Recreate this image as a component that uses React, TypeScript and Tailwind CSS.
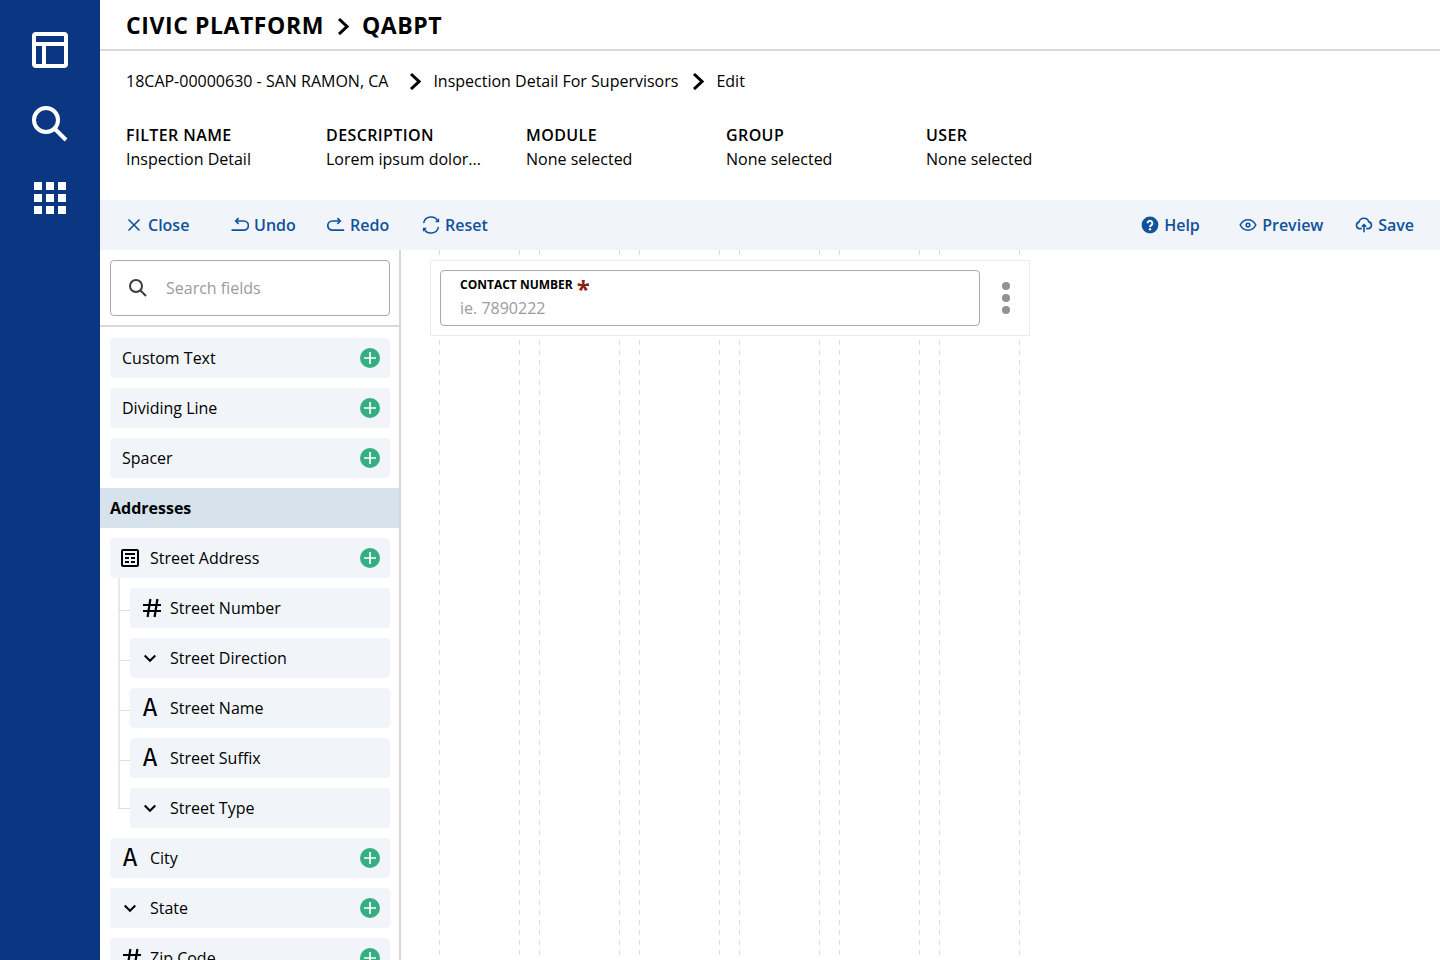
import React from "react";

type FieldKind = "text" | "number" | "select" | "group";

interface Field {
  label: string;
  kind?: FieldKind;
  children?: Field[];
}

const basicFields: Field[] = [
  { label: "Custom Text" },
  { label: "Dividing Line" },
  { label: "Spacer" },
];

const addressFields: Field[] = [
  {
    label: "Street Address",
    kind: "group",
    children: [
      { label: "Street Number", kind: "number" },
      { label: "Street Direction", kind: "select" },
      { label: "Street Name", kind: "text" },
      { label: "Street Suffix", kind: "text" },
      { label: "Street Type", kind: "select" },
    ],
  },
  { label: "City", kind: "text" },
  { label: "State", kind: "select" },
  { label: "Zip Code", kind: "number" },
];

const filterDetails = [
  { name: "FILTER NAME", value: "Inspection Detail" },
  { name: "DESCRIPTION", value: "Lorem ipsum dolor..." },
  { name: "MODULE", value: "None selected" },
  { name: "GROUP", value: "None selected" },
  { name: "USER", value: "None selected" },
];

const gridColumns = [1, 2, 3, 4, 5, 6];

const CloseIcon = () => (
  <svg className="size-[18px]" viewBox="0 0 18 18" fill="none" stroke="currentColor" strokeWidth="1.6">
    <path d="M3.5 3.5l11 11M14.5 3.5l-11 11" />
  </svg>
);

const UndoIcon = () => (
  <svg className="size-[18px]" viewBox="0 0 18 18" fill="none" stroke="currentColor" strokeWidth="1.7">
    <path d="M0.5 14.2H12.8a4.6 4.6 0 0 0 0-9.2H5" />
    <path d="M7.6 2.2L4.8 5L7.6 7.8" />
  </svg>
);

const RedoIcon = () => (
  <svg className="size-[18px]" viewBox="0 0 18 18" fill="none" stroke="currentColor" strokeWidth="1.7">
    <path d="M17.2 14.2H5.4a4.6 4.6 0 0 1 0-9.2H13" />
    <path d="M10.4 2.2L13.2 5L10.4 7.8" />
  </svg>
);

const ResetIcon = () => (
  <svg className="size-[18px]" viewBox="0 0 18 18" fill="none" stroke="currentColor" strokeWidth="1.5">
    <path d="M1.6 7.2A7.6 7.6 0 0 1 16 5.4M16.4 10.8A7.6 7.6 0 0 1 2 12.6" />
    <path d="M16.4 2.8V5.6H13.6M1.6 15.2V12.4H4.4" />
  </svg>
);

const HelpIcon = () => (
  <svg className="size-[18px]" viewBox="0 0 18 18" fill="none">
    <circle cx="9" cy="9" r="8.4" fill="currentColor" />
    <path d="M6.6 7.2a2.4 2.4 0 1 1 3.7 2c-.9.6-1.3.8-1.3 1.8" stroke="#fff" strokeWidth="2" />
    <circle cx="9" cy="13.2" r="1.2" fill="#fff" />
  </svg>
);

const PreviewIcon = () => (
  <svg className="size-[18px]" viewBox="0 0 18 18" fill="none" stroke="currentColor" strokeWidth="1.6">
    <path d="M1.2 9C3 5.6 5.8 3.8 9 3.8S15 5.6 16.8 9C15 12.4 12.2 14.2 9 14.2S3 12.4 1.2 9Z" />
    <circle cx="9" cy="9" r="1.8" />
  </svg>
);

const SaveIcon = () => (
  <svg className="size-[18px]" viewBox="0 0 18 18" fill="none" stroke="currentColor" strokeWidth="1.6">
    <path d="M6.8 12.6H4.6a3.3 3.3 0 0 1-.6-6.5a5.1 5.1 0 0 1 9.8-.2a3.4 3.4 0 0 1-.4 6.7H11.2" />
    <path d="M9 16.2V8.8M6.8 10.8L9 8.6L11.2 10.8" />
  </svg>
);

const SearchIcon: React.FC<{ className: string }> = ({ className }) => (
  <svg className={className} viewBox="0 0 36 36" fill="none" stroke="currentColor" strokeWidth="4">
    <circle cx="14" cy="14" r="12" />
    <path d="M22.5 22.5L34 34" />
  </svg>
);

const CrumbArrow = () => (
  <svg className="h-[18px] w-3 shrink-0" viewBox="0 0 12 18" fill="none" stroke="currentColor" strokeWidth="3">
    <path d="M2 2L10 9.5L2 17" />
  </svg>
);

const KindIcon: React.FC<{ kind: FieldKind }> = ({ kind }) => {
  if (kind === "text") {
    return (
      <span aria-hidden="true" className="w-5 text-center font-['DejaVu_Sans_Mono',monospace] text-[25px] leading-5">
        A
      </span>
    );
  }
  if (kind === "number") {
    return (
      <svg className="size-5 overflow-visible" viewBox="0 0 20 20" fill="none" stroke="currentColor" strokeWidth="2.2">
        <path d="M3 7H21M3 13H21M10.4 1L7.6 19M17.4 1L14.6 19" />
      </svg>
    );
  }
  if (kind === "select") {
    return (
      <svg className="size-5" viewBox="0 0 20 20" fill="none" stroke="currentColor" strokeWidth="2">
        <path d="M4.7 7.5L10 12.8L15.3 7.5" />
      </svg>
    );
  }
  return (
    <svg className="size-5" viewBox="0 0 20 20" fill="none" stroke="currentColor" strokeWidth="2">
      <rect x="2" y="2" width="16" height="16" rx="1" />
      <path d="M5 6H15M5 10H9M11 10H15M5 14H9M11 14H15" />
    </svg>
  );
};

const FieldRow: React.FC<{ field: Field; addable?: boolean }> = ({ field, addable = true }) => (
  <div
    className={`flex h-10 items-center justify-between rounded bg-[#f1f5fa] pr-2.5 ${
      field.kind ? "pl-2.5" : "pl-3"
    }`}
  >
    <span className="flex items-center gap-2.5">
      {field.kind && <KindIcon kind={field.kind} />}
      {field.label}
    </span>
    {addable && (
      <button type="button" aria-label={`Add ${field.label}`} className="size-5 rounded-full bg-[#35ae84]">
        <svg className="size-5" viewBox="0 0 20 20" fill="none" stroke="#fff" strokeWidth="1.7">
          <path d="M10 4V16M4 10H16" />
        </svg>
      </button>
    )}
  </div>
);

const FieldItem: React.FC<{ field: Field }> = ({ field }) => (
  <li className="flex flex-col gap-2.5">
    <FieldRow field={field} />
    {field.children && (
      <ul className="flex flex-col gap-2.5 pl-5">
        {field.children.map((child) => (
          <li key={child.label} className="group relative">
            <span className="absolute -top-2.5 -left-3 h-[50px] w-0.5 bg-[#e6eaee] group-last:h-[31px]" />
            <span className="absolute top-[22px] -left-3 h-px w-3 bg-[#d9dfe4] group-last:top-5" />
            <FieldRow field={child} addable={false} />
          </li>
        ))}
      </ul>
    )}
  </li>
);

const ToolButton: React.FC<{ label: string; icon: React.ReactNode; className?: string }> = ({
  label,
  icon,
  className = "",
}) => (
  <button type="button" className={`flex items-center gap-[5px] font-semibold text-[#10529c] ${className}`}>
    {icon}
    {label}
  </button>
);

const App: React.FC = () => {
  return (
    <div className="flex h-screen overflow-hidden bg-white font-['Open_Sans',sans-serif] text-base text-black">
      <nav className="flex w-[100px] shrink-0 flex-col items-center gap-[38px] bg-[#0b3782] pt-8 text-white">
        <button type="button" aria-label="Layout">
          <svg className="size-9" viewBox="0 0 36 36" fill="none" stroke="currentColor" strokeWidth="4">
            <rect x="2" y="2" width="32" height="32" rx="2" />
            <path d="M2 12H34M12 12V34" />
          </svg>
        </button>
        <button type="button" aria-label="Search">
          <SearchIcon className="size-9" />
        </button>
        <button type="button" aria-label="Apps">
          <svg className="size-9" viewBox="0 0 36 36" fill="currentColor">
            <path d="M2 2h8v8H2zM14 2h8v8h-8zM26 2h8v8h-8zM2 14h8v8H2zM14 14h8v8h-8zM26 14h8v8h-8zM2 26h8v8H2zM14 26h8v8h-8zM26 26h8v8h-8z" />
          </svg>
        </button>
      </nav>

      <div className="flex min-w-0 flex-1 flex-col">
        <header className="flex h-[51px] shrink-0 items-center border-b-2 border-[#d8d8d8] pt-0.5 pl-[26px]">
          <h1 className="flex items-center gap-[13px] text-[23px] font-bold tracking-wide">
            CIVIC PLATFORM
            <CrumbArrow />
            QABPT
          </h1>
        </header>

        <section className="flex h-[149px] shrink-0 flex-col gap-6 pt-[18px] pl-[26px]">
          <div className="flex items-center gap-3.5">
            <a href="#record" className="pr-[7px]">
              18CAP-00000630 - SAN RAMON, CA
            </a>
            <span className="flex items-center gap-3">
              <CrumbArrow />
              <a href="#detail">Inspection Detail For Supervisors</a>
            </span>
            <span className="flex items-center gap-3">
              <CrumbArrow />
              <span>Edit</span>
            </span>
          </div>
          <dl className="flex pt-1.5">
            {filterDetails.map((detail) => (
              <div key={detail.name} className="w-[200px]">
                <dt className="font-semibold tracking-wide">{detail.name}</dt>
                <dd>{detail.value}</dd>
              </div>
            ))}
          </dl>
        </section>

        <div className="flex h-[50px] shrink-0 items-center justify-between bg-[#f1f5fa] pr-[26px] pl-[25px]">
          <div className="flex">
            <ToolButton label="Close" icon={<CloseIcon />} className="w-[106px]" />
            <ToolButton label="Undo" icon={<UndoIcon />} className="w-24" />
            <ToolButton label="Redo" icon={<RedoIcon />} className="w-[95px]" />
            <ToolButton label="Reset" icon={<ResetIcon />} />
          </div>
          <div className="flex">
            <ToolButton label="Help" icon={<HelpIcon />} className="w-[98px]" />
            <ToolButton label="Preview" icon={<PreviewIcon />} className="w-[116px]" />
            <ToolButton label="Save" icon={<SaveIcon />} />
          </div>
        </div>

        <div className="flex min-h-0 flex-1">
          <aside className="flex w-[301px] shrink-0 flex-col border-r-2 border-[#d8d8d8]">
            <div className="border-b-2 border-[#d8d8d8] pt-2.5 pr-[9px] pb-[9px] pl-2.5">
              <label className="flex h-14 items-center gap-[19px] rounded border border-[#a9a9ae] pl-[18px]">
                <SearchIcon className="size-[18px] text-[#3c3c40]" />
                <input
                  type="text"
                  aria-label="Search fields"
                  placeholder="Search fields"
                  className="min-w-0 flex-1 outline-none placeholder:text-[#9b9ba1]"
                />
              </label>
            </div>
            <div className="flex min-h-0 flex-1 flex-col gap-2.5 overflow-y-auto pt-[11px] [scrollbar-width:none]">
              <ul className="flex flex-col gap-2.5 pr-[9px] pl-2.5">
                {basicFields.map((field) => (
                  <FieldItem key={field.label} field={field} />
                ))}
              </ul>
              <h2 className="flex h-10 shrink-0 items-center bg-[#d6e3ed] pl-2.5 font-bold">Addresses</h2>
              <ul className="flex flex-col gap-2.5 pr-[9px] pl-2.5">
                {addressFields.map((field) => (
                  <FieldItem key={field.label} field={field} />
                ))}
              </ul>
            </div>
          </aside>

          <main className="min-w-0 flex-1 pl-[29px]">
            <div className="relative h-full w-[600px] pt-2.5">
              {/* column guides behind the dropped fields */}
              <div className="absolute inset-0 flex gap-[19px] pr-2.5 pl-[9px]">
                {gridColumns.map((column) => (
                  <div key={column} className="flex flex-1 justify-between">
                    <div className="w-px bg-[repeating-linear-gradient(to_bottom,#dcdcdc_0_5px,transparent_5px_10px)]" />
                    <div className="w-px bg-[repeating-linear-gradient(to_bottom,#dcdcdc_0_5px,transparent_5px_10px)]" />
                  </div>
                ))}
              </div>
              <div className="relative flex h-[76px] items-center border border-[#ebebeb] bg-white pl-[9px]">
                <div className="flex h-14 w-[540px] flex-col rounded border border-[#a9a9ae] pt-1 pl-[19px]">
                  <label htmlFor="contact-number" className="flex h-5 items-center gap-1 text-xs font-bold">
                    CONTACT NUMBER
                    <span className="h-5 text-2xl leading-7 text-[#8a1f0c]">*</span>
                  </label>
                  <input
                    id="contact-number"
                    type="text"
                    placeholder="ie. 7890222"
                    className="h-[26px] outline-none placeholder:text-[#9b9ba1]"
                  />
                </div>
                <button type="button" aria-label="Field options" className="ml-[21px]">
                  <svg className="h-8 w-2.5" viewBox="0 0 10 32" fill="#919197">
                    <circle cx="5" cy="4" r="4" />
                    <circle cx="5" cy="16" r="4" />
                    <circle cx="5" cy="28" r="4" />
                  </svg>
                </button>
              </div>
            </div>
          </main>
        </div>
      </div>
    </div>
  );
};

export default App;
